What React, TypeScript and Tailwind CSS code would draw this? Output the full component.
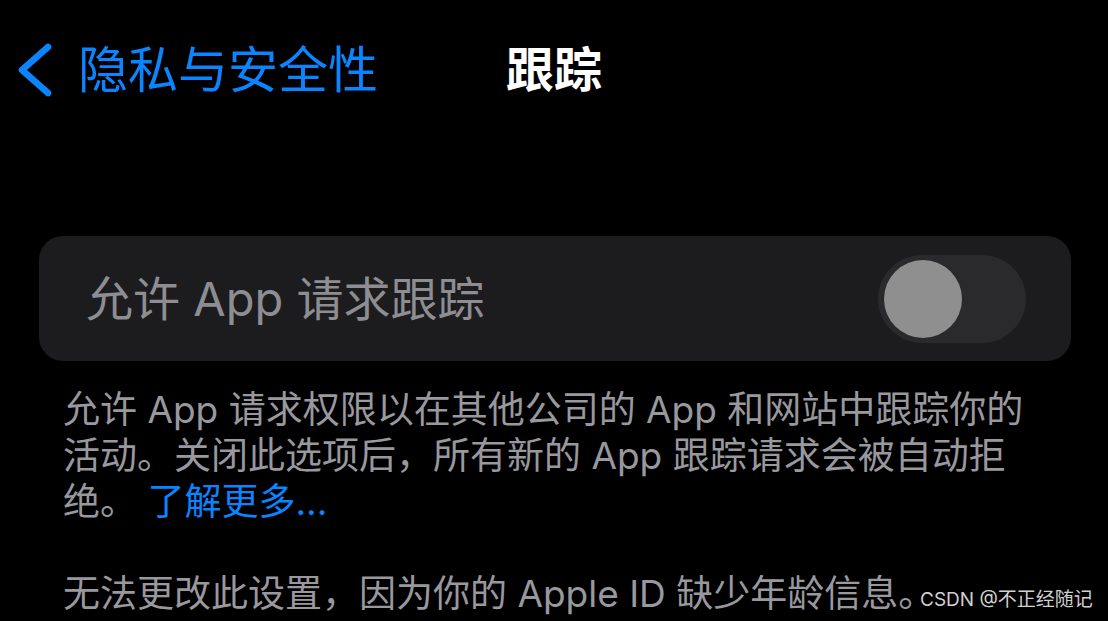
import React from "react";

const font = "font-['Inter','Noto_Sans_CJK_SC',sans-serif]";

function Toggle() {
  return (
    <div className="w-[148px] h-[88px] rounded-full bg-[#2a2a2c] flex items-center pl-[6px]">
      <div className="w-[78px] h-[78px] rounded-full bg-[#8f8f8f]" />
    </div>
  );
}

export default function App() {
  return (
    <div className={`relative w-[1108px] h-[621px] bg-black overflow-hidden ${font}`}>
      <div className="grid grid-cols-[1fr_auto_1fr] items-center h-[140px]">
        <div className="flex items-center pl-[14px] gap-[22px] text-[#0a84ff]">
          <svg width="42" height="60" viewBox="0 0 42 60" fill="none">
            <path d="M34 7 L8 30 L34 53" stroke="#0a84ff" strokeWidth="6.5" strokeLinecap="round" strokeLinejoin="round" />
          </svg>
          <span className="text-[50px] leading-none">隐私与安全性</span>
        </div>
        <h1 className="text-[48px] leading-none font-bold text-white">跟踪</h1>
        <div />
      </div>

      <div className="mt-[96px] ml-[39px] mr-[37px] h-[125px] rounded-[24px] bg-[#1c1c1e] flex items-center justify-between pl-[47px] pr-[45px]">
        <span className="text-[47px] text-[#8d8d92] leading-none">允许 App 请求跟踪</span>
        <Toggle />
      </div>

      <div className="mt-[26px] px-[63px] text-[37px] leading-[46px] text-[#98989e] whitespace-nowrap">
        <p>允许 App 请求权限以在其他公司的 App 和网站中跟踪你的</p>
        <p>活动。关闭此选项后，所有新的 App 跟踪请求会被自动拒</p>
        <p>
          绝。 <span className="text-[#0a84ff]">了解更多...</span>
        </p>
        <p className="mt-[46px]">无法更改此设置，因为你的 Apple ID 缺少年龄信息。</p>
      </div>

      <div className="absolute left-[920px] top-[590px] text-[19px] leading-none text-[#d0d0d0]">CSDN @不正经随记</div>
    </div>
  );
}
